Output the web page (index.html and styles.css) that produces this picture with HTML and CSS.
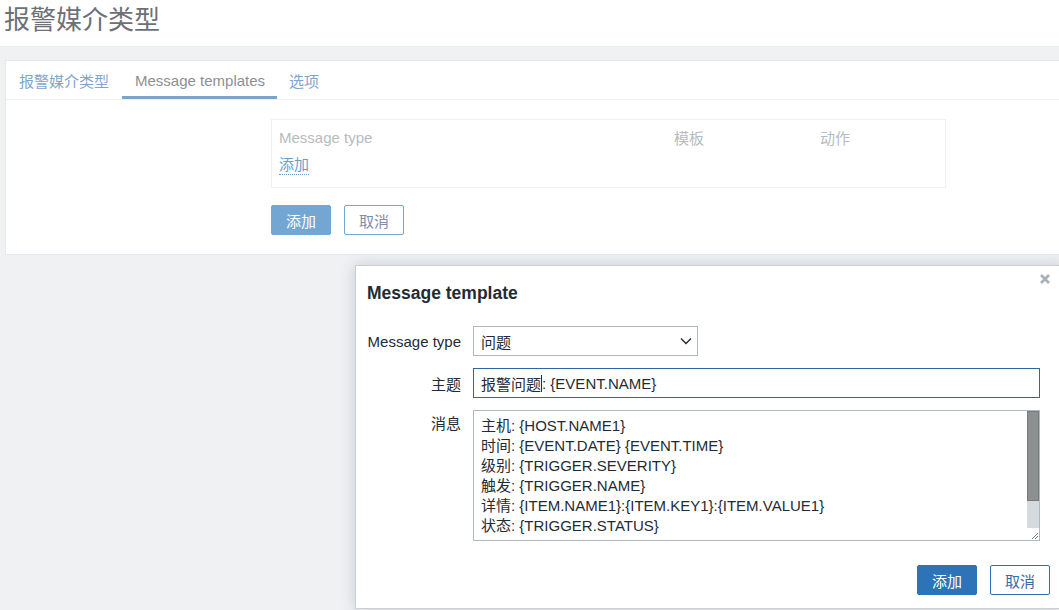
FILE: index.html
```html
<!DOCTYPE html>
<html lang="zh">
<head>
<meta charset="utf-8">
<title>报警媒介类型</title>
<link rel="stylesheet" href="styles.css">
</head>
<body>
<header class="page-header">
  <h1 class="page-title">报警媒介类型</h1>
</header>
<main class="page-main">
  <section class="card">
    <nav class="tabs">
      <a class="tab">报警媒介类型</a>
      <a class="tab tab-active">Message templates</a>
      <a class="tab">选项</a>
    </nav>
    <div class="card-body">
      <div class="tpl-table">
        <div class="tpl-head">
          <span>Message type</span>
          <span>模板</span>
          <span>动作</span>
        </div>
        <div class="tpl-row"><a class="link-dotted">添加</a></div>
      </div>
      <div class="form-buttons">
        <button class="btn btn-primary btn-faded">添加</button>
        <button class="btn btn-alt btn-faded">取消</button>
      </div>
    </div>
  </section>
</main>

<div class="modal">
  <div class="modal-header">
    <h4 class="modal-title">Message template</h4>
    <svg class="modal-close" width="12" height="12" viewBox="0 0 12 12"><path d="M2 2 L10 10 M10 2 L2 10" stroke="#a7b0b6" stroke-width="2.6" stroke-linecap="butt"/></svg>
  </div>
  <div class="modal-body">
    <div class="form-row">
      <label class="form-label">Message type</label>
      <div class="select">
        <span>问题</span>
        <svg width="12" height="8" viewBox="0 0 12 8"><path d="M1 1.5 L6 6.5 L11 1.5" fill="none" stroke="#1f2c33" stroke-width="1.4"/></svg>
      </div>
    </div>
    <div class="form-row">
      <label class="form-label">主题</label>
      <div class="input input-focus">报警问题<span class="caret"></span>: {EVENT.NAME}</div>
    </div>
    <div class="form-row form-row-top">
      <label class="form-label label-top">消息</label>
      <div class="textarea">
        <div class="textarea-text">主机: {HOST.NAME1}<br>时间: {EVENT.DATE} {EVENT.TIME}<br>级别: {TRIGGER.SEVERITY}<br>触发: {TRIGGER.NAME}<br>详情: {ITEM.NAME1}:{ITEM.KEY1}:{ITEM.VALUE1}<br>状态: {TRIGGER.STATUS}</div>
        <div class="scrollbar">
          <div class="scroll-thumb"></div>
          <div class="scroll-track"></div>
          <div class="scroll-resizer">
            <svg width="11" height="11" viewBox="0 0 11 11"><path d="M10 4 L4 10 M10 7 L7 10" stroke="#7d7d7d" stroke-width="1"/></svg>
          </div>
        </div>
      </div>
    </div>
  </div>
  <div class="modal-footer">
    <button class="btn btn-primary">添加</button>
    <button class="btn btn-alt">取消</button>
  </div>
</div>
</body>
</html>
```

FILE: styles.css
```css
* { box-sizing: border-box; }

html, body {
  margin: 0;
  padding: 0;
  width: 1059px;
  height: 610px;
  overflow: hidden;
}

body {
  font-family: "Liberation Sans", "Noto Sans CJK SC", sans-serif;
  font-size: 15px;
  color: #1f2c33;
  background: #eff1f3;
  position: relative;
}

.page-header {
  height: 47px;
  background: #ffffff;
  border-bottom: 1px solid #e9ecee;
  padding-left: 4px;
}

.page-title {
  margin: 0;
  font-size: 26px;
  font-weight: normal;
  line-height: 40px;
  color: #6b7177;
}

.page-main {
  padding: 13px 0 0 5px;
}

.card {
  background: #ffffff;
  border: 1px solid #e6e9ec;
  border-right: none;
  width: 1060px;
}

.tabs {
  display: flex;
  height: 39px;
  border-bottom: 1px solid #eef0f2;
}

.tab {
  display: flex;
  align-items: center;
  padding: 0 13px;
  height: 38px;
  color: #7fa5cb;
  border-bottom: 3px solid transparent;
  padding-top: 3px;
}

.tab-active {
  color: #8b9095;
  border-bottom-color: #79a5cd;
  padding: 3px 12px 0 13px;
}

.tab:last-child {
  padding-left: 12px;
}

.card-body {
  padding: 19px 0 19px 265px;
}

.tpl-table {
  width: 675px;
  border: 1px solid #eef0f2;
  padding: 0 7px 11px;
}

.tpl-head {
  display: grid;
  grid-template-columns: 395px 146px 1fr;
  height: 34px;
  align-items: center;
  color: #b8bbbe;
}

.tpl-row {
  height: 22px;
  display: flex;
  align-items: center;
}

.link-dotted {
  color: #6b9dcb;
  border-bottom: 1px dotted #6b9dcb;
  line-height: 18px;
}

.form-buttons {
  display: flex;
  gap: 13px;
  margin-top: 17px;
}

.btn {
  width: 60px;
  height: 30px;
  border-radius: 2px;
  font-family: "Liberation Sans", "Noto Sans CJK SC", sans-serif;
  font-size: 15px;
  padding: 0;
  cursor: pointer;
}

.btn-primary {
  background: #2c73b8;
  border: 1px solid #2c73b8;
  color: #ffffff;
}

.btn-alt {
  background: #ffffff;
  border: 1px solid #2c73b8;
  color: #3b6aa5;
}

.btn-primary.btn-faded {
  background: #74a6d4;
  border-color: #74a6d4;
}

.btn-alt.btn-faded {
  border-color: #74a6d4;
  color: #7b8fae;
}

/* modal */
.modal {
  position: absolute;
  left: 355px;
  top: 265px;
  width: 710px;
  height: 344px;
  background: #ffffff;
  border: 1px solid #c9cfd4;
  box-shadow: 0 0 14px rgba(60, 75, 90, 0.22);
}

.modal-header {
  position: relative;
  height: 49px;
  padding: 16px 11px 0;
}

.modal-title {
  margin: 0;
  font-size: 17.5px;
  line-height: 22px;
  font-weight: bold;
  color: #1f2c33;
}

.modal-close {
  position: absolute;
  right: 13px;
  top: 7px;
}

.modal-body {
  padding: 11px 0 0 0;
  display: flex;
  flex-direction: column;
  gap: 12px;
}

.form-row {
  display: flex;
  align-items: center;
}

.form-row-top {
  align-items: flex-start;
}

.form-label {
  width: 117px;
  flex-shrink: 0;
  text-align: right;
  padding-right: 12px;
  color: #1f2c33;
}

.label-top {
  padding-top: 4px;
  line-height: 20px;
}

.select {
  width: 225px;
  height: 30px;
  border: 1px solid #acbbc2;
  display: flex;
  align-items: center;
  justify-content: space-between;
  padding: 0 5px 0 7px;
}

.input {
  width: 567px;
  height: 30px;
  border: 1px solid #2f67a3;
  display: flex;
  align-items: center;
  padding: 0 7px;
  white-space: pre;
}

.caret {
  display: inline-block;
  width: 1px;
  height: 17px;
  background: #1f2c33;
}

.textarea {
  width: 567px;
  height: 131px;
  border: 1px solid #acbbc2;
  display: flex;
  overflow: hidden;
}

.textarea-text {
  flex: 1;
  padding: 5px 7px;
  line-height: 20px;
  white-space: nowrap;
  overflow: hidden;
}

.scrollbar {
  width: 12px;
  display: flex;
  flex-direction: column;
}

.scroll-thumb {
  height: 90px;
  background: #8e8f90;
  border: 1px solid #7a7b7c;
}

.scroll-track {
  flex: 1;
  background: #d4dadd;
}

.scroll-resizer {
  height: 12px;
  background: #ffffff;
  display: flex;
  justify-content: flex-end;
  align-items: flex-end;
}

.scroll-resizer svg { display: block; }

.modal-footer {
  display: flex;
  justify-content: flex-end;
  gap: 13px;
  padding: 24px 0 0 0;
  margin-right: 14px;
}
```
